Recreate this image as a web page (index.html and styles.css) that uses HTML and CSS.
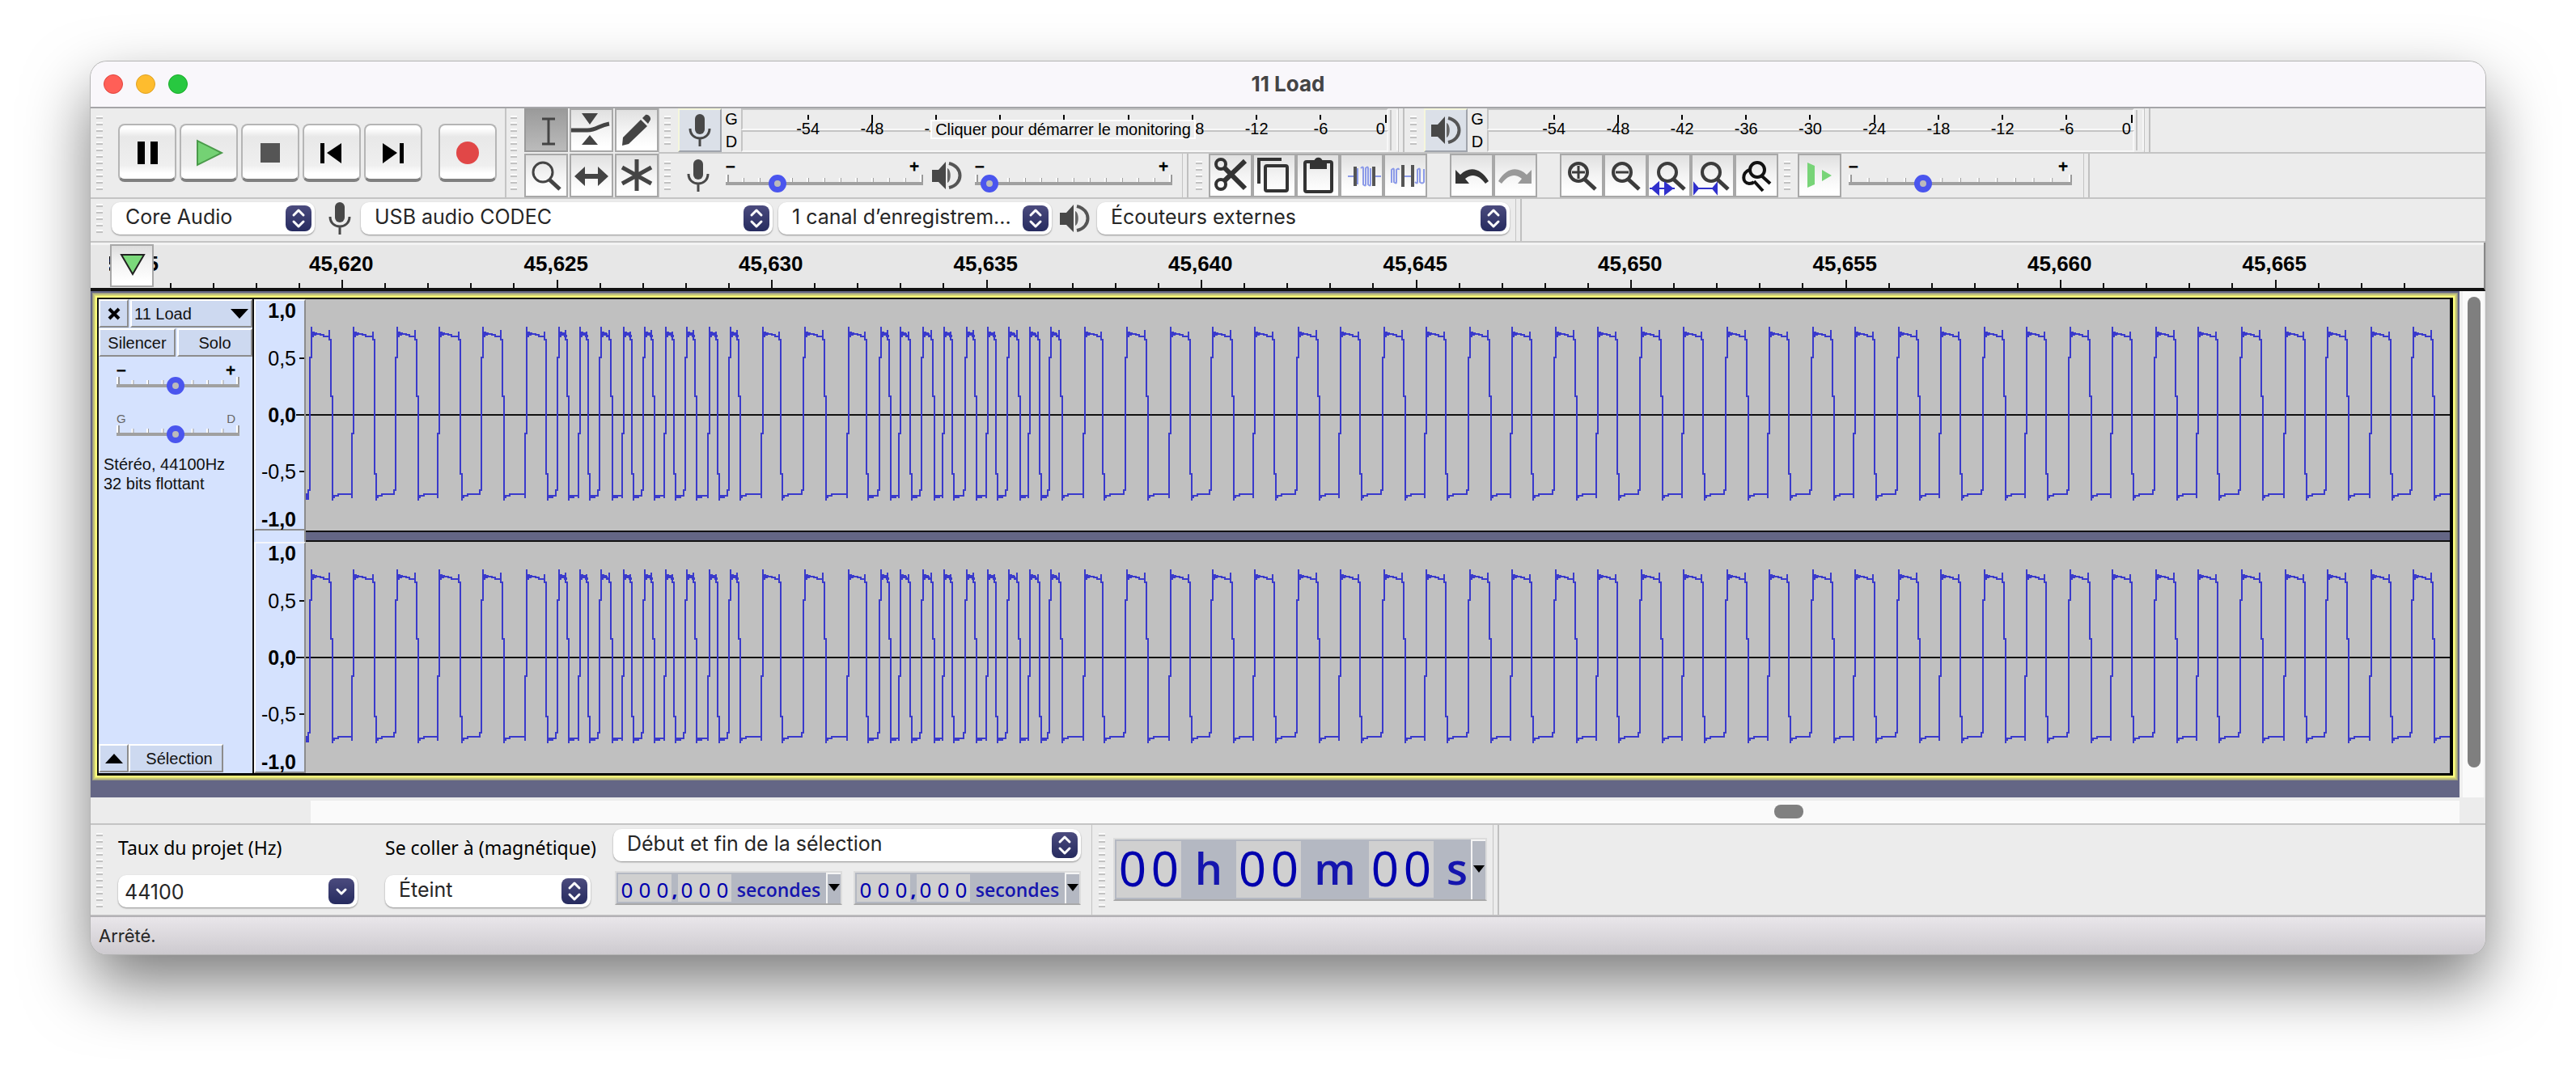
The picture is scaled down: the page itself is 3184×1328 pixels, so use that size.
FILE: index.html
```html
<!DOCTYPE html>
<html lang="fr">
<head>
<meta charset="utf-8">
<title>11 Load</title>
<link rel="stylesheet" href="styles.css">
</head>
<body>
<svg class="sprite" aria-hidden="true">
  <symbol id="i-mic" viewBox="0 0 32 42"><rect x="10" y="1" width="12" height="25" rx="6" fill="#484848"/><path d="M4 19c0 16 24 16 24 0M16 31v10" fill="none" stroke="#484848" stroke-width="3"/></symbol>
  <symbol id="i-speaker" viewBox="0 0 38 36"><path d="M1 11h8l9-10v34L9 26H1z" fill="#484848"/><path d="M20 9c5 2 5 16 0 18z" fill="#666"/><path d="M22 3c18 4 18 26 0 30" fill="none" stroke="#555" stroke-width="4"/></symbol>
  <symbol id="i-updown" viewBox="0 0 32 32"><path d="M10 12l6-6 6 6M10 20l6 6 6-6" fill="none" stroke="#fff" stroke-width="3" stroke-linecap="round" stroke-linejoin="round"/></symbol>
  <symbol id="i-down" viewBox="0 0 32 32"><path d="M11 14l5 5 5-5" fill="none" stroke="#fff" stroke-width="3" stroke-linecap="round" stroke-linejoin="round"/></symbol>
  <symbol id="i-lens" viewBox="0 0 54 54"><circle cx="23" cy="23" r="11" fill="none" stroke="#3c3c3c" stroke-width="4"/><path d="M31 32l13 12" stroke="#3c3c3c" stroke-width="5"/></symbol>
  <symbol id="i-undo" viewBox="0 0 54 54"><path d="M7 20v17h17l-5-6c8-7 17-5 25 6l4-3C38 17 24 15 13 26z"/></symbol>
</svg>

<main class="window">
  <header class="titlebar">
    <div class="lights"><button class="light red" aria-label="Fermer"></button><button class="light amber" aria-label="Réduire"></button><button class="light green" aria-label="Agrandir"></button></div>
    <h1>11 Load</h1>
  </header>

  <section class="toolbars">
    <div class="transport">
      <span class="grip tall"></span>
      <button class="big" aria-label="Pause"><svg viewBox="0 0 72 72"><path d="M24 22h9v28h-9zM40 22h9v28h-9z"/></svg></button>
      <button class="big" aria-label="Lecture"><svg viewBox="0 0 72 72"><path d="M22 21v30l30-15z" fill="#74d274" stroke="#4a9a4a" stroke-width="2"/></svg></button>
      <button class="big" aria-label="Arrêt"><svg viewBox="0 0 72 72"><path d="M24 24h24v24H24z" fill="#555"/></svg></button>
      <button class="big" aria-label="Début"><svg viewBox="0 0 72 72"><path d="M22 24h5v25h-5zM48 24v25L30 36z"/></svg></button>
      <button class="big" aria-label="Fin"><svg viewBox="0 0 72 72"><path d="M44 24h5v25h-5zM23 24v25l18-13z"/></svg></button>
      <button class="big record" aria-label="Enregistrer"><svg viewBox="0 0 72 72"><circle cx="36" cy="36" r="14" fill="#e14747"/></svg></button>
    </div>
    <div class="tools">
      <span class="grip tall"></span>
      <div class="toolgrid">
        <button class="tool on" aria-label="Sélection"><svg viewBox="0 0 54 54"><path d="M22 13h16M22 44h16M30 13v31" stroke="#444" stroke-width="3"/></svg></button>
        <button class="tool" aria-label="Enveloppe"><svg viewBox="0 0 54 54"><path d="M15 6h20L25 20zM15 45h20L25 33z" fill="#444"/><path d="M2 27h20c12 0 14-6 27-8" fill="none" stroke="#444" stroke-width="5"/></svg></button>
        <button class="tool" aria-label="Crayon"><svg viewBox="0 0 54 54"><path d="M9 46l1-10L32 14l8 8-23 22zM34 12l4-4c3-1 7 3 6 6l-3 5z" fill="#444"/></svg></button>
        <button class="tool" aria-label="Zoom"><svg viewBox="0 0 54 54"><circle cx="23" cy="23" r="12" fill="none" stroke="#444" stroke-width="3"/><path d="M31 32l13 12" stroke="#444" stroke-width="5"/></svg></button>
        <button class="tool" aria-label="Glissement"><svg viewBox="0 0 54 54"><path d="M6 28l13-12v9h16v-9l13 12-13 12v-9H19v9z" fill="#444"/></svg></button>
        <button class="tool" aria-label="Multi-outils"><svg viewBox="0 0 54 54"><path d="M27 7v39M9 17l36 20M9 37l36-20" stroke="#444" stroke-width="5"/></svg></button>
      </div>
    </div>
    <div class="stack">
      <div class="row meters">
        <span class="grip"></span>
        <button class="mbtn" aria-label="Vumètre d'enregistrement"><svg width="32" height="42"><use href="#i-mic"/></svg></button>
        <div class="gd"><span>G</span><span>D</span></div>
        <div class="meter">
          <div class="bar"></div><div class="bar"></div>
          <div class="scale"><i></i><span>-54</span><span class="long">-48</span><span>-42</span><span></span><span></span><span class="long"></span><span>-18</span><span>-12</span><span>-6</span><span class="long last">0</span></div>
          <div class="hint">Cliquer pour démarrer le monitoring</div>
        </div>
        <span class="peak"></span>
        <span class="seam"></span>
        <span class="grip"></span>
        <button class="mbtn" aria-label="Vumètre de lecture"><svg width="38" height="36"><use href="#i-speaker"/></svg></button>
        <div class="gd"><span>G</span><span>D</span></div>
        <div class="meter">
          <div class="bar"></div><div class="bar"></div>
          <div class="scale"><i></i><span>-54</span><span class="long">-48</span><span>-42</span><span>-36</span><span>-30</span><span class="long">-24</span><span>-18</span><span>-12</span><span>-6</span><span class="long last">0</span></div>
        </div>
        <span class="peak"></span>
        <span class="seam"></span>
      </div>
      <div class="row">
        <span class="grip"></span>
        <span class="ico mic"><svg width="32" height="42"><use href="#i-mic"/></svg></span>
        <div class="slider"><div class="pm"><span>−</span><span>+</span></div><input type="range" min="0" max="100" value="24" aria-label="Volume d'enregistrement"></div>
        <span class="ico spk"><svg width="38" height="36"><use href="#i-speaker"/></svg></span>
        <div class="slider"><div class="pm"><span>−</span><span>+</span></div><input type="range" min="0" max="100" value="3" aria-label="Volume de lecture"></div>
        <span class="seam"></span>
        <span class="grip"></span>
        <div class="group">
          <button class="tool" aria-label="Couper"><svg viewBox="0 0 54 54" fill="none" stroke="#333"><g stroke-width="4"><circle cx="15" cy="13" r="6"/><circle cx="15" cy="38" r="6"/></g><path d="M19 17l26 26M19 34L45 9" stroke-width="6"/></svg></button>
          <button class="tool" aria-label="Copier"><svg viewBox="0 0 54 54" fill="none" stroke="#333" stroke-width="4"><path d="M8 37V7h28"/><rect x="16" y="15" width="27" height="31" rx="2"/></svg></button>
          <button class="tool" aria-label="Coller"><svg viewBox="0 0 54 54"><rect x="11" y="10" width="33" height="37" rx="2" fill="none" stroke="#333" stroke-width="4"/><path d="M17 10h5c1-7 10-7 11 0h5v9H17z" fill="#333"/></svg></button>
          <button class="tool" aria-label="Rogner"><svg viewBox="0 0 54 54" fill="none"><path d="M10 28h8M44 28h7M22 18v20M26 18q3-3 3 0v20q3 3 3 0V18q3-3 3 0v20q3 3 3 0V18" stroke="#8b9ae8" stroke-width="2"/><path d="M19 16v24M42 16v24" stroke="#555" stroke-width="4"/></svg></button>
          <button class="tool" aria-label="Silence"><svg viewBox="0 0 54 54" fill="none"><path d="M10 36V20q3-3 3 0v15q3 3 3 0V20q3-3 3 0M24 28h12M39 35q3 3 3 0V20q3-3 3 0v15q3 3 5 0V19" stroke="#8b9ae8" stroke-width="2"/><path d="M24 14v27M36 14v27" stroke="#555" stroke-width="4"/></svg></button>
        </div>
        <div class="group">
          <button class="tool" aria-label="Annuler"><svg viewBox="0 0 54 54" fill="#333"><use href="#i-undo"/></svg></button>
          <button class="tool flip" aria-label="Rétablir" disabled><svg viewBox="0 0 54 54" fill="#999"><use href="#i-undo"/></svg></button>
        </div>
        <div class="group">
          <button class="tool" aria-label="Zoom avant"><svg viewBox="0 0 54 54"><use href="#i-lens"/><path d="M15 23h16M23 15v16" stroke="#3c3c3c" stroke-width="3"/></svg></button>
          <button class="tool" aria-label="Zoom arrière"><svg viewBox="0 0 54 54"><use href="#i-lens"/><path d="M15 23h16" stroke="#3c3c3c" stroke-width="3"/></svg></button>
          <button class="tool" aria-label="Zoomer sur la sélection"><svg viewBox="0 0 54 54"><use href="#i-lens" x="2"/><path d="M3 43h31M14 36v14L6 43zM22 36v14l9-7z" fill="#3030cc" stroke="#3030cc" stroke-width="2"/></svg></button>
          <button class="tool" aria-label="Adapter à la largeur"><svg viewBox="0 0 54 54"><use href="#i-lens" x="2"/><path d="M4 43h28M4 37v12l5-6zM32 37v12l-5-6z" fill="#3030cc" stroke="#3030cc" stroke-width="2"/></svg></button>
          <button class="tool" aria-label="Basculer le zoom"><svg viewBox="0 0 54 54" fill="none" stroke="#111" stroke-width="4"><circle cx="28" cy="20" r="9"/><path d="M18 20c-9 4-9 16 0 17 3 0 5-1 6-2M24 34l11 12M34 28l10 9"/></svg></button>
        </div>
        <span class="grip"></span>
        <button class="tool speed" aria-label="Lire à vitesse"><svg viewBox="0 0 54 54" fill="#78d478"><path d="M12 11l9 4v23l-9 4zM30 20l12 7-12 7z"/></svg></button>
        <div class="slider wide"><div class="pm"><span>−</span><span>+</span></div><input type="range" min="0" max="100" value="32" aria-label="Vitesse de lecture"></div>
        <span class="seam"></span>
      </div>
    </div>
  </section>

  <section class="devices">
    <span class="grip"></span>
    <label class="pop host"><select aria-label="Hôte audio"><option>Core Audio</option></select><svg><use href="#i-updown"/></svg></label>
    <span class="ico in"><svg width="32" height="42"><use href="#i-mic"/></svg></span>
    <label class="pop input"><select aria-label="Périphérique d'enregistrement"><option>USB audio CODEC</option></select><svg><use href="#i-updown"/></svg></label>
    <label class="pop chans"><select aria-label="Canaux"><option>1 canal d’enregistrem...</option></select><svg><use href="#i-updown"/></svg></label>
    <span class="ico"><svg width="38" height="36"><use href="#i-speaker"/></svg></span>
    <label class="pop output"><select aria-label="Périphérique de lecture"><option>Écouteurs externes</option></select><svg><use href="#i-updown"/></svg></label>
    <span class="seam"></span>
  </section>

  <section class="timeline">
    <svg class="ticks" id="ticks" aria-hidden="true"></svg>
    <span class="hidden-label">45,615</span>
    <button class="pin" aria-label="Tête de lecture épinglée"><svg viewBox="0 0 54 54"><path d="M14 13h28L28 37z" fill="#7bd97b" stroke="#222" stroke-width="2"/></svg></button>
    <div class="labels"><span>45,620</span><span>45,625</span><span>45,630</span><span>45,635</span><span>45,640</span><span>45,645</span><span>45,650</span><span>45,655</span><span>45,660</span><span>45,665</span></div>
  </section>

  <section class="workspace">
    <div class="tracks">
      <article class="track">
        <div class="frame">
          <aside class="panel">
            <div class="prow"><button class="pb close" aria-label="Fermer la piste"><svg width="16" height="16"><path d="M2 2l12 12M14 2L2 14" stroke="#000" stroke-width="4"/></svg></button><button class="pb name">11 Load<svg width="22" height="12"><path d="M0 0h22L11 12z"/></svg></button></div>
            <div class="prow second"><button class="pb mute">Silencer</button><button class="pb solo">Solo</button></div>
            <div class="slider gain"><div class="pm"><span>−</span><span>+</span></div><input type="range" min="0" max="100" value="48" aria-label="Gain"></div>
            <div class="slider gain pan"><div class="pm"><span>G</span><span>D</span></div><input type="range" min="0" max="100" value="48" aria-label="Panoramique"></div>
            <p>Stéréo, 44100Hz<br>32 bits flottant</p>
            <div class="prow foot"><button class="pb close" aria-label="Réduire la piste"><svg width="22" height="12"><path d="M0 12h22L11 0z"/></svg></button><button class="pb sel">Sélection</button></div>
          </aside>
          <div class="channels">
            <div class="channel">
              <div class="vruler"><b>1,0</b><span class="dash">0,5</span><b class="dash zero">0,0</b><span class="dash">-0,5</span><b>-1,0</b></div>
              <svg class="wave"><path class="axis" d="M0 143h4000"/><path class="signal"/></svg>
            </div>
            <div class="divider"><span></span></div>
            <div class="channel">
              <div class="vruler"><b>1,0</b><span class="dash">0,5</span><b class="dash zero">0,0</b><span class="dash">-0,5</span><b>-1,0</b></div>
              <svg class="wave"><path class="axis" d="M0 143h4000"/><path class="signal"/></svg>
            </div>
          </div>
        </div>
      </article>
    </div>
    <div class="vscroll"><span></span></div>
  </section>
  <div class="hscroll"><div class="hbar"><span></span></div></div>

  <section class="selection">
    <span class="grip tall"></span>
    <div class="field rate"><label for="rate">Taux du projet (Hz)</label><div class="pop combo"><input id="rate" value="44100"><svg><use href="#i-down"/></svg></div></div>
    <div class="field snap"><label for="snap">Se coller à (magnétique)</label><div class="pop"><select id="snap"><option>Éteint</option></select><svg><use href="#i-updown"/></svg></div></div>
    <div class="range">
      <label class="pop"><select aria-label="Mode de sélection"><option>Début et fin de la sélection</option></select><svg><use href="#i-updown"/></svg></label>
      <div class="times">
        <div class="time"><span class="dg"><i>0</i><i>0</i><i>0</i></span><b class="comma">,</b><span class="dg"><i>0</i><i>0</i><i>0</i></span><b class="unit">secondes</b><button aria-label="Format"><svg width="14" height="9"><path d="M0 0h14L7 9z"/></svg></button></div>
        <div class="time"><span class="dg"><i>0</i><i>0</i><i>0</i></span><b class="comma">,</b><span class="dg"><i>0</i><i>0</i><i>0</i></span><b class="unit">secondes</b><button aria-label="Format"><svg width="14" height="9"><path d="M0 0h14L7 9z"/></svg></button></div>
      </div>
    </div>
    <span class="line"></span>
    <span class="grip tall"></span>
    <div class="time clock"><span class="dg"><i>0</i><i>0</i></span><b class="unit">h</b><span class="dg"><i>0</i><i>0</i></span><b class="unit mid">m</b><span class="dg"><i>0</i><i>0</i></span><b class="unit sec">s</b><button aria-label="Format"><svg width="14" height="9"><path d="M0 0h14L7 9z"/></svg></button></div>
    <span class="seam"></span>
  </section>
  <footer class="status">Arrêté.</footer>
</main>
<script src="app.js"></script>
</body>
</html>
```
FILE: styles.css
```css
* { box-sizing: border-box; }
body { margin: 0; background: #fff; color: #000; font-family: "Liberation Sans", Arial, sans-serif; font-size: 20px; overflow-x: hidden; }
button, input, select { font: inherit; color: inherit; margin: 0; padding: 0; border: 0; background: none; }
svg { display: block; }
i { font-style: normal; }
.sprite { position: absolute; width: 0; height: 0; }

.window { margin: 76px 112px 148px; border-radius: 20px; background: #ececec; overflow: hidden; box-shadow: 0 0 0 1px #b4b4b4, 0 36px 80px rgba(0, 0, 0, .52); }
.titlebar { display: grid; grid-template-columns: 1fr auto 1fr; align-items: center; height: 58px; padding: 0 16px; background: #f9f7fb; border-bottom: 2px solid #a5a5a8; }
.titlebar h1 { margin: 0; font: 700 26px/30px Inter, sans-serif; color: #444; }
.lights { display: flex; gap: 16px; }
.light { width: 24px; height: 24px; border-radius: 50%; }
.red { background: #ff5f57; border: 1px solid #e0443e; }
.amber { background: #febc2e; border: 1px solid #dea123; }
.green { background: #28c840; border: 1px solid #1aab29; }

.grip { flex: none; align-self: center; width: 8px; height: 36px; background: repeating-linear-gradient(#fbfbfb 0 2px, #c2c2c2 2px 4px, transparent 4px 8px); }
.grip.tall { height: 92px; }
.seam { flex: none; align-self: stretch; width: 8px; border-left: 1px solid #c4c4c4; border-right: 2px solid #c0c0c0; }

.toolbars { display: flex; border-bottom: 2px solid #c4c4c4; }
.transport, .tools { display: flex; align-items: center; }
.transport { padding-left: 7px; border-right: 2px solid #c4c4c4; padding-right: 10px; }
.transport .grip { margin-right: 19px; }
.big { width: 72px; height: 72px; margin-right: 4px; border: 2px solid #b5b5b5; border-bottom: 4px solid #808080; border-radius: 8px; background: linear-gradient(#fff 0 4px, #e8e8e8 14px, #efefef 75%, #fff 90%); }
.big svg { width: 72px; height: 72px; margin: -2px; }
.big.record { margin: 0 0 0 16px; }
.tools { padding-left: 5px; }
.tools .grip { margin-right: 9px; }
.toolgrid { display: grid; grid-template-columns: repeat(3, 54px); gap: 2px; }
.tool { flex: none; width: 54px; height: 54px; border: 2px solid #a8a8a8; background: linear-gradient(#e0e0e0, #f4f4f4 50%, #fff 90%); }
.tool svg { width: 54px; height: 54px; margin: -2px; overflow: visible; }
.tool.on { border-color: #999; background: linear-gradient(#9b9b9b, #bbb); }
.tool.flip svg { transform: scaleX(-1); }

.stack { flex: 1; min-width: 0; border-left: 1px solid #c4c4c4; }
.row { display: flex; height: 54px; align-items: center; padding-left: 6px; }
.meters { height: 56px; border-bottom: 2px solid #c4c4c4; }
.mbtn { display: flex; align-items: center; justify-content: center; width: 54px; height: 54px; margin-left: 9px; background: #dbe0e8; border: 2px solid; border-color: #f5f7dc #a0a4ac #a0a4ac #f5f7dc; }
.gd { display: flex; flex-direction: column; justify-content: space-between; align-items: center; width: 24px; height: 52px; line-height: 24px; }
.meter { position: relative; width: 800px; height: 54px; }
.bar { height: 27px; border: 2px solid; border-color: #c4c4c4 #f8f8f8 #f8f8f8 #c4c4c4; }
.scale { position: absolute; inset: 0; display: grid; grid-template-columns: 43px repeat(9, 1fr) 44px; }
.scale span { padding-top: 14px; line-height: 22px; text-align: center; background: linear-gradient(#000, #000) center 8px / 2px 6px no-repeat; }
.scale .long { background-size: 2px 10px; }
.scale .last { text-align: right; padding-right: 4px; background-position: right 2px top 8px; }
.hint { position: absolute; left: 0; right: 4px; top: 14px; width: max-content; margin: auto; padding: 0 4px; line-height: 20px; border: 2px solid #fff; background: #ececec; }
.peak { width: 10px; height: 50px; margin: 0 0 0 2px; border-left: 2px solid #c4c4c4; border-right: 2px solid #f8f8f8; }
.meters .seam { margin-right: 7px; }

.ico { flex: none; display: flex; justify-content: center; align-items: center; }
.mic { width: 68px; }
.spk { width: 64px; padding-right: 6px; }
.slider { width: 244px; }
.slider.wide { width: 276px; margin-left: 9px; margin-right: 14px; }
.pm { display: flex; justify-content: space-between; height: 20px; padding-right: 5px; font: 20px/20px "Liberation Sans", sans-serif; -webkit-text-stroke: 1px #000; }
.slider input { appearance: none; -webkit-appearance: none; display: block; width: 100%; height: 22px;
  background: linear-gradient(#a0a0a0, #a0a0a0) 0 9px / 100% 4px no-repeat,
    linear-gradient(90deg, #fff 0 2px, #999 2px 4px) 0 0 / 4px 9px no-repeat,
    linear-gradient(90deg, #fff 0 2px, #999 2px 4px) 100% 0 / 4px 9px no-repeat,
    linear-gradient(90deg, #fff 0 2px, #999 2px 3px, transparent 3px) 0 4px / calc((100% - 4px) / 12) 5px repeat-x; }
.slider input::-webkit-slider-thumb { -webkit-appearance: none; width: 22px; height: 22px; border: 7px solid #4a55ee; border-radius: 50%; background: #bbb; }
.row > .slider + .seam { margin: 0 9px 0 12px; }
.group { display: flex; }
.grip + .group { margin-left: 8px; }
.group + .group { margin-left: 28px; }
.group + .grip { margin-left: 7px; }
.speed { margin-left: 9px; }
.row > .slider.wide + .seam { margin-left: 0; }

.devices { display: flex; align-items: center; padding: 4px 0 8px 7px; border-bottom: 2px solid #c4c4c4; }
.devices .grip { margin-right: 11px; }
.devices .ico { width: 56px; height: 40px; }
.devices .in { width: 57px; padding-left: 4px; }
.devices .seam { height: 52px; margin: -4px 0 -8px 7px; }
.pop { position: relative; display: block; flex: none; height: 40px; border-radius: 10px; background: #fff; box-shadow: 0 1px 2px rgba(0, 0, 0, .4); }
.pop select, .pop input { appearance: none; -webkit-appearance: none; width: 100%; height: 40px; padding: 0 44px 4px 17px; font: 25px/32px Inter, sans-serif; color: #262626; outline: 0; text-overflow: clip; }
.pop svg { position: absolute; right: 4px; top: 4px; width: 32px; height: 32px; border-radius: 8px; background: linear-gradient(#4b4b7e, #262b5f); pointer-events: none; }
.host { width: 251px; }
.input { width: 509px; margin-right: 7px; }
.chans { width: 338px; }
.output { width: 510px; }

.timeline { position: relative; display: flex; height: 60px; background: linear-gradient(#f3f3f3 0 3px, #e7e7e7 3px); border-bottom: 4px solid #111; border-right: 2px solid #888; font: 700 26px/52px "Liberation Sans", sans-serif; overflow: hidden; }
.ticks { position: absolute; inset: 0; width: 100%; height: 56px; }
.hidden-label { display: flex; justify-content: flex-end; width: 61px; height: 56px; margin-left: 23px; overflow: hidden; }
.pin { position: absolute; left: 24px; top: 2px; width: 54px; height: 53px; border: 2px solid #a8a8a8; background: linear-gradient(#ddd, #f2f2f2 40%, #fff 90%); }
.pin svg { width: 54px; height: 54px; margin: -2px; }
.labels { flex: none; display: grid; grid-template-columns: repeat(10, 1fr); width: 2655px; margin-left: 93px; text-align: center; }

.workspace { display: flex; }
.tracks { flex: 1; min-width: 0; padding: 2px 2px 21px; background: #646685; }
.track { padding: 6px; background: #ffff80; box-shadow: inset 0 0 0 1px #9a9a80, inset 0 0 0 2px #b8b880, inset 0 0 0 3px #c9c97c, inset 0 0 0 4px #e0e070; }
.frame { display: flex; border: 2px solid #111; border-right: 4px solid #000; border-bottom: 3px solid #000; }
.panel { flex: none; display: flex; flex-direction: column; width: 192px; background: #d5e2fe; border-right: 2px solid #111; color: #111; }
.prow { display: flex; gap: 2px; height: 36px; }
.second { margin-bottom: 6px; }
.pb { display: flex; align-items: center; justify-content: center; height: 35px; background: #cdd9f0; border: 2px solid; border-color: #fff #8c8c8c #8c8c8c #fff; line-height: 24px; }
.close { width: 37px; }
.name { flex: 1; justify-content: space-between; padding: 0 3px; }
.mute { width: 95px; }
.solo { flex: 1; }
.sel { width: 117px; padding-left: 8px; }
.gain { width: 152px; margin-left: 22px; margin-bottom: 20px; }
.gain input { background-size: 100% 4px, 4px 9px, 4px 9px, calc((100% - 4px) / 8) 5px; }
.gain .pm { margin-bottom: -2px; }
.pan .pm { font-size: 15px; color: #666; -webkit-text-stroke: 0; }
.panel p { margin: -6px 0 0 6px; line-height: 24px; white-space: nowrap; }
.foot { margin-top: auto; gap: 0; }
.channels { flex: 1; min-width: 0; }
.channel { display: flex; height: 286px; }
.vruler { flex: none; display: grid; grid-template-rows: 24px 94px 46px 94px 24px; align-items: center; width: 64px; background: #d5e2fe; border: 2px solid; border-color: #f4f6fb #8c8c8c #8c8c8c #fff; font-size: 25px; line-height: 26px; }
.vruler b, .vruler > span { display: flex; justify-content: flex-end; align-items: center; padding-right: 10px; margin-left: -4px; }
.vruler .dash { padding-right: 0; }
.dash::after { content: ""; width: 6px; height: 2px; margin-left: 4px; background: #111; }
.zero::after { width: 10px; margin-left: 0; }
.divider { height: 14px; background: #646685; border: solid #111; border-width: 2px 0; }
.divider span { display: block; width: 64px; height: 14px; margin-top: -2px; background: #d5e2fe; border-right: 2px solid #8c8c8c; }
.wave { flex: 1; min-width: 0; height: 286px; background: #c0c0c0; }
.wave path { fill: none; stroke-width: 2; }
.axis { stroke: #111; }
.signal { stroke: #3a3acb; }
.vscroll { width: 32px; padding: 7px 0 37px 6px; background: #fafafa; border-left: 4px solid #efefef; border-right: 2px solid #efefef; }
.vscroll span { display: block; width: 16px; height: 100%; border-radius: 8px; background: #7f7f7f; }
.hscroll { height: 34px; padding: 4px 32px 2px 272px; border-bottom: 2px solid #c4c4c4; }
.hbar { height: 28px; padding: 5px 0 0 68.1%; background: #fafafa; }
.hbar span { display: block; width: 36px; height: 17px; border-radius: 8px; background: #808080; }

.selection { display: flex; align-items: flex-start; height: 112px; padding-left: 7px; border-bottom: 1px solid #c4c4c4; }
.selection > .grip { align-self: center; }
.field { display: flex; flex-direction: column; gap: 18px; padding-top: 12px; }
.field label { font: 400 23px/32px "Noto Sans", sans-serif; white-space: nowrap; }
.rate { width: 296px; margin-left: 19px; margin-right: 34px; }
.snap { width: 254px; margin-right: 28px; }
.combo input { padding: 2px 40px 0 8px; }
.range { width: 578px; padding-top: 5px; }
.times { display: flex; gap: 14px; margin: 12px 0 0 2px; }
.time { display: flex; width: 282px; height: 42px; padding: 2px 0 2px 2px; background: #b4b8c2; border: 2px solid; border-color: #dcdcdc #dcdcdc #a8a8a8; color: #0000ae; font: 26px/38px "Noto Sans", sans-serif; }
.time .dg { display: flex; height: 34px; background: #d0d0d0; }
.dg i { width: 22px; text-align: center; }
.comma { width: 8px; text-align: center; font: 700 24px/38px "Noto Sans", sans-serif; }
.unit { flex: 1; min-width: 0; text-align: center; font: 600 23px/38px "Open Sans", sans-serif; color: #1515ae; }
.time button { display: flex; justify-content: center; width: 18px; margin: -2px 0; padding: 12px 0 0; border-left: 2px solid #f4f4f4; border-top: 2px solid #f4f4f4; }
.line { align-self: stretch; width: 1px; margin: 0 8px 0 13px; background: #c4c4c4; }
.clock { width: 462px; height: 78px; margin: 16px 7px 0 10px; font-size: 60px; line-height: 66px; }
.clock .dg { height: 70px; }
.clock .dg i { width: 40px; }
.clock .unit { flex: none; width: 68px; font: 600 54px/66px "Open Sans", sans-serif; }
.clock .mid { width: 84px; }
.clock .sec { flex: 1; padding-left: 12px; }
.clock button { padding-top: 30px; }
.status { height: 48px; padding: 0 10px; border-top: 2px solid #b4b2b6; background: linear-gradient(#e9e6ea, #cdcacf); font: 22px/46px Inter, sans-serif; color: #262626; }
```
FILE: app.js
```js
// Time ruler: one tick per millisecond, a long one every five.
const PX_PER_MS = 53.1, ORIGIN = 311;
let d = "";
for (let k = -4; k < 49; k++) {
  const x = Math.round(ORIGIN + k * PX_PER_MS);
  d += `M${x} 56V${k % 5 ? 50 : 46}`;
}
document.getElementById("ticks").innerHTML = `<path d="${d}" stroke="#111" stroke-width="2"/>`;

// Edges of the tape signal, alternating rise and fall, in pixels from the clip's left.
const edges = [5, 31, 57, 84, 110, 137, 163, 190, 217, 243, 270, 296, 310, 322, 336, 348, 362, 376, 390, 402,
  416, 429, 442, 455, 468, 481, 496, 508, 522, 534, 562, 587, 614, 641, 668, 693, 708, 720, 733, 746, 760,
  774, 786, 799, 814, 826, 840, 852, 866, 880, 892, 906, 919, 932, 960, 985, 1012, 1038, 1066, 1092];
for (let k = 0; k < 29; k++) {
  const x = 1118 + k * 53.04;
  edges.push(x, x + 26);
}
const snap = x => Math.floor(x / 2) * 2 + 1;
let p = "M0 241H1V247";
edges.forEach((e, k) => {
  const x = snap(e);
  const short = (edges[k + 1] || 1e5) - e < 18;
  const early = k % 4 < 2;
  if (k % 2 === 0) {
    // Rise: short step off the floor, then up to the overshoot.
    p += early ? `H${x - 2}V236H${x}V72H${x + 2}V34` : `H${x}V246V166H${x + 2}V34`;
    p += "V46h2v-5h1v3h2v-2h1v1";
    p += short ? "h1v3h2v-1" : "h5v1h4v2h4";
  } else {
    // Fall: small spike at the end of the plateau, then down to the undershoot.
    p += early ? `H${x - 2}V38V50H${x}V120H${x + 2}V249` : `H${x - 2}V40V50H${x}V216H${x + 2}V249`;
    p += "V241v4h2v-2h2";
    p += short ? "v2h2v-2" : "h3V241h4";
  }
});
p += "H4000";
document.querySelectorAll(".signal").forEach(s => s.setAttribute("d", p));
```
